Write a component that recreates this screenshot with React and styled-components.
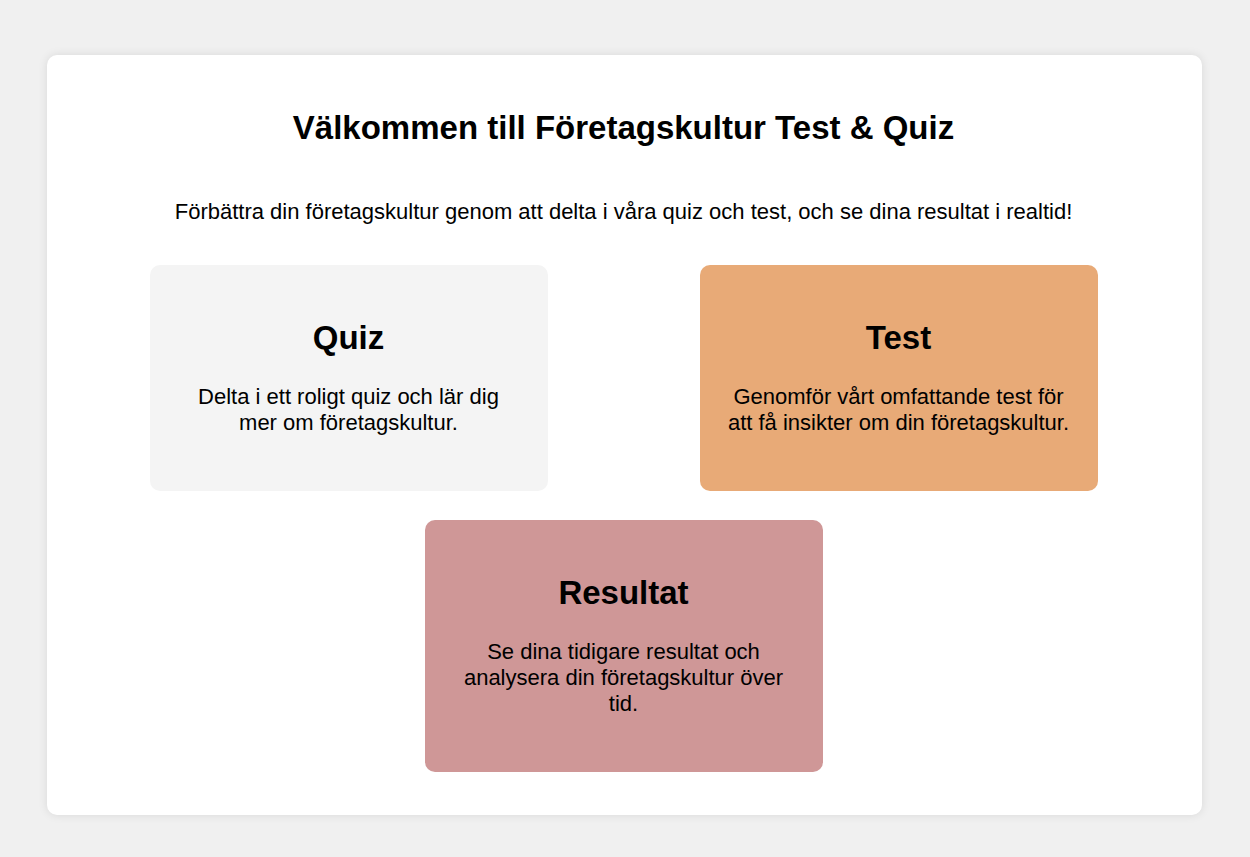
import React from "react";
import styled, { createGlobalStyle } from "styled-components";

const GlobalStyle = createGlobalStyle`
  html, body { margin: 0; padding: 0; }
  body {
    background: #f0f0f0;
    font-family: "Liberation Sans", Arial, sans-serif;
    color: #000;
  }
`;

const Page = styled.div`
  padding: 55px 48px 42px 47px;
`;

const Container = styled.main`
  background: #ffffff;
  border-radius: 10px;
  box-shadow: 0 0 10px rgba(0, 0, 0, 0.1);
  padding: 54px 28px 43px 26px;
  text-align: center;
`;

const Title = styled.h1`
  margin: 0;
  font-size: 33px;
  line-height: 38px;
  font-weight: bold;
`;

const Lead = styled.p`
  margin: 52px 0 0;
  font-size: 22px;
  line-height: 25px;
`;

const Cards = styled.div`
  display: flex;
  flex-wrap: wrap;
  justify-content: center;
  column-gap: 152px;
  row-gap: 29px;
  margin-top: 41px;
`;

const Card = styled.section`
  width: 398px;
  box-sizing: border-box;
  padding: 54px 28px 55px;
  border-radius: 10px;
  background: ${(p) => p.$bg};
`;

const CardTitle = styled.h2`
  margin: 0;
  font-size: 33px;
  line-height: 38px;
  font-weight: bold;
`;

const CardText = styled.p`
  margin: 27px 0 0;
  font-size: 22px;
  line-height: 26px;
`;

const cards = [
  { title: "Quiz", text: "Delta i ett roligt quiz och lär dig mer om företagskultur.", bg: "#f4f4f4" },
  { title: "Test", text: "Genomför vårt omfattande test för att få insikter om din företagskultur.", bg: "#e8aa77" },
  { title: "Resultat", text: "Se dina tidigare resultat och analysera din företagskultur över tid.", bg: "#cf9797" },
];

export default function App() {
  return (
    <>
      <GlobalStyle />
      <Page>
        <Container>
          <Title>Välkommen till Företagskultur Test &amp; Quiz</Title>
          <Lead>
            Förbättra din företagskultur genom att delta i våra quiz och test, och se dina resultat i realtid!
          </Lead>
          <Cards>
            {cards.map((c) => (
              <Card key={c.title} $bg={c.bg}>
                <CardTitle>{c.title}</CardTitle>
                <CardText>{c.text}</CardText>
              </Card>
            ))}
          </Cards>
        </Container>
      </Page>
    </>
  );
}
